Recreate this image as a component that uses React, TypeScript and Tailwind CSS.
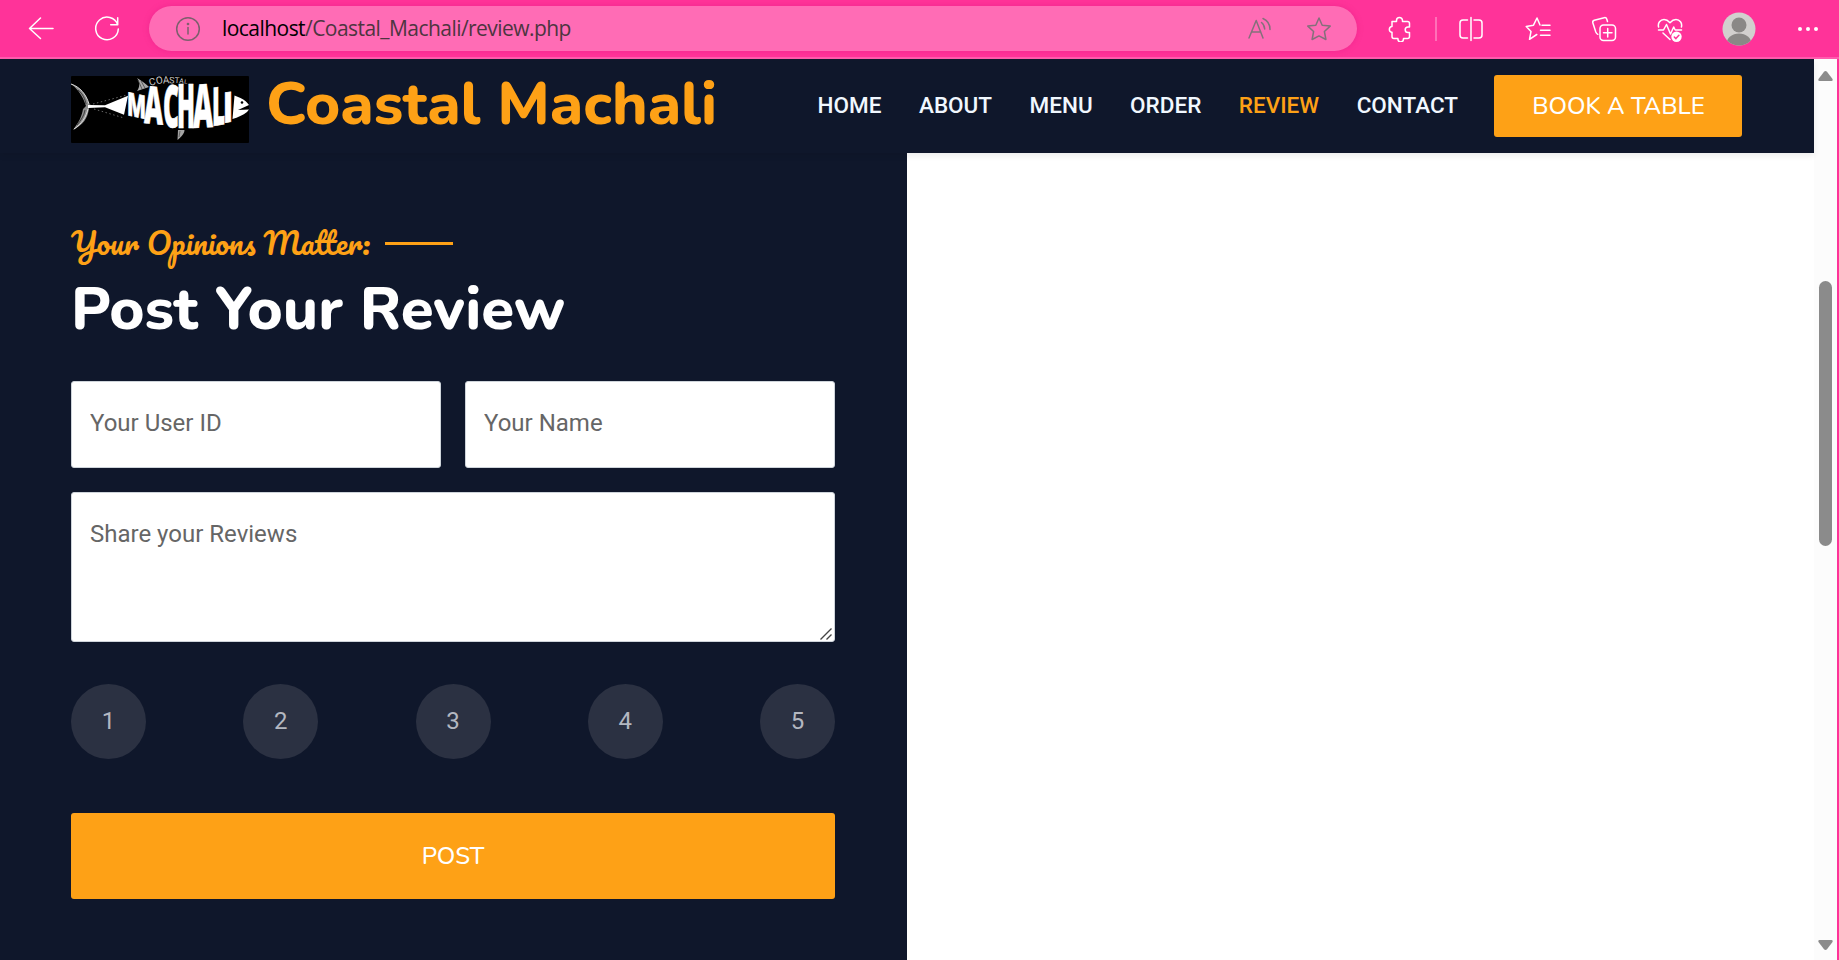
import type { ReactNode } from 'react';

function Icon({ children, className = '' }: { children: ReactNode; className?: string }) {
  return (
    <svg
      viewBox="0 0 26 26"
      className={`h-[26px] w-[26px] shrink-0 ${className}`}
      fill="none"
      stroke="currentColor"
      strokeWidth="1.5"
      strokeLinecap="round"
      strokeLinejoin="round"
    >
      {children}
    </svg>
  );
}

const starPath =
  'M13 2l3.2 7.2 8 .9-5.8 5.4 1.5 8L13 19.900l-6.900 3.600 1.500-8L1.800 10.100l8-.9z';

function Toolbar() {
  return (
    <header className="flex h-[59px] shrink-0 items-center border-b-2 border-[#ff5cae] bg-[#ff3399] pl-7 text-white">
      <Icon>
        <path d="M25 12.500H1.500M12.500 2L1.500 12.500 12.500 22.500" />
      </Icon>
      <Icon className="ml-10">
        <path d="M23.700 8.800A11.300 11.300 0 1 0 24.300 13M23.700 1.800v7h-7" />
      </Icon>
      <div className="ml-[29px] flex h-[45px] w-[1208px] shrink-0 items-center rounded-full bg-[#ff6cb5] pr-[25px] pl-[26px] text-[#85707b] shadow-[0_0_6px_rgba(200,0,110,0.25)]">
        <Icon className="text-[#7d5f6d]">
          <circle cx="13" cy="13" r="11.300" />
          <path d="M13 11.500v6.500" />
          <circle cx="13" cy="8" r="0.600" fill="currentColor" />
        </Icon>
        <span className="ml-[21px] font-['Open_Sans',sans-serif] text-[21px] tracking-[-0.55px] whitespace-nowrap text-[#4d3540]">
          <span className="text-black">localhost</span>/Coastal_Machali/review.php
        </span>
        <Icon className="ml-auto">
          <path d="M2 22L9.200 4.500 16 22M4.500 16h9.300M14.500 6.500c2 1.500 3 3.500 3.200 6.500M16 2.500c4.500 2 7 5.500 7 11" />
        </Icon>
        <Icon className="ml-[33px]">
          <path d={starPath} />
        </Icon>
      </div>
      <Icon className="ml-[30px]">
        <path d="M5 5.500h4.500v-1a3 3 0 0 1 6 0v1h5a2 2 0 0 1 2 2V11h-1.500a2.800 2.800 0 0 0 0 5.600h1.500v4a2 2 0 0 1-2 2h-4v.5a2.800 2.800 0 0 1-5.600 0v-.5H7a2 2 0 0 1-2-2v-4.300H4.600a3 3 0 0 1 0-5.800H5z" />
      </Icon>
      <div className="ml-[22px] h-6 w-0.5 bg-[#ff70b8]" />
      <Icon className="ml-[21px]">
        <path d="M13 1.500v23M9.500 4H5a3 3 0 0 0-3 3v12a3 3 0 0 0 3 3h4.500M16 4h5a3 3 0 0 1 3 3v12a3 3 0 0 1-3 3h-5" />
      </Icon>
      <Icon className="ml-[41px]">
        <path d="M11 19l-6.500 4.300L6 15.500 1.200 10.500l7.300-1.300L12 2l3 7M17 9.200h8M15.500 14.200H25M15.500 19.200H25M11 19l.8-.5" />
      </Icon>
      <Icon className="ml-10">
        <rect x="9" y="9" width="15.500" height="15.500" rx="3.500" />
        <path d="M16.700 12.500v8.500M12.500 16.700H21M16.500 5.500l-.7-2.300a2.200 2.200 0 0 0-2.600-1.500L3.300 4.200a2.200 2.200 0 0 0-1.500 2.600l3 9.200c.4 1.100 1 1.800 2 2.300" />
      </Icon>
      <Icon className="ml-10">
        <path d="M1.600 11C.5 7 3.300 3.500 7 3.500c2.500 0 4.300 1.300 6 3.200 1.700-1.900 3.500-3.200 6-3.200 3.700 0 6.500 3.500 5.400 7.500M1.500 14h5L9.500 8.500l4 9.500 3.200-7 1.500 3h6.300M6 17l7 6.500" />
        <circle cx="19.500" cy="20.800" r="5.200" fill="currentColor" stroke="none" />
        <path d="M17.300 21l1.600 1.600 3-3.300" stroke="#ff3399" />
      </Icon>
      <svg viewBox="0 0 34 34" className="ml-[39px] h-[34px] w-[34px] shrink-0">
        <clipPath id="avatar">
          <circle cx="17" cy="17" r="16.500" />
        </clipPath>
        <g clipPath="url(#avatar)">
          <rect width="34" height="34" fill="#d2d0ce" />
          <circle cx="17" cy="13" r="7.500" fill="#8a8886" />
          <ellipse cx="17" cy="32" rx="12.500" ry="10.500" fill="#8a8886" />
        </g>
      </svg>
      <div className="ml-[42px] flex gap-1">
        <span className="h-1 w-1 rounded-full bg-white" />
        <span className="h-1 w-1 rounded-full bg-white" />
        <span className="h-1 w-1 rounded-full bg-white" />
      </div>
    </header>
  );
}

const logoLetters = [
  { c: 'M', x: 56, y: 39, w: 19, h: 23, skew: 12 },
  { c: 'A', x: 73, y: 47, w: 19, h: 37, skew: 5 },
  { c: 'C', x: 92, y: 51, w: 16, h: 42, skew: 2 },
  { c: 'H', x: 106, y: 52, w: 18, h: 44, skew: 0 },
  { c: 'A', x: 122, y: 52, w: 20, h: 43, skew: -3 },
  { c: 'L', x: 141, y: 50, w: 13, h: 38, skew: -8 },
  { c: 'I', x: 152, y: 47, w: 10, h: 30, skew: -9 },
];

function FishLogo() {
  return (
    <svg viewBox="0 0 178 67" className="h-[67px] w-[178px] shrink-0 overflow-visible rounded-[1px] bg-black">
      <path d="M0 8c9 3 15 10 18 20l4 2-4 2C17 42 12 49 2 54c6-8 9-14 10-21l3-3C12 21 8 14 0 8z" fill="#8d8d8d" />
      <path d="M0 8c9 3 15 10 18 20M3 53c8-5 12-12 14-20" stroke="#ddd" strokeWidth="1" fill="none" />
      <path d="M7 14c5 4 7 9 8 14M6 49c4-5 7-9 8-15" stroke="#333" strokeWidth="0.900" fill="none" />
      <path d="M17 29l17 .3 23-9.500-4 19-19-7.600-17 .8z" fill="#fff" />
      <path d="M22 28l34-9M23 33l30 9" stroke="#666" strokeWidth="1" strokeDasharray="1.500 2.500" />
      <path d="M66 2c5 3 9 6 12 9l-12 4c3-4 3-9 0-13z" fill="#aaa" />
      <path d="M67 4l4 9M70 5l4 7" stroke="#444" strokeWidth="0.800" />
      <g fill="#c8c8c8" fontFamily="Roboto, sans-serif" fontSize="10">
        <text transform="translate(79 10) rotate(-16)">C</text>
        <text transform="translate(85.500 8.300) rotate(-10)">O</text>
        <text transform="translate(92 7.500) rotate(-3)">A</text>
        <text transform="translate(98 7.200) rotate(2)" fontSize="9">S</text>
        <text transform="translate(103.500 6.800) rotate(4)" fontSize="8">T</text>
        <text transform="translate(108 7) rotate(7)" fontSize="7">A</text>
        <text transform="translate(113 7.500) rotate(8)" fontSize="6">L</text>
      </g>
      {logoLetters.map((l, i) => (
        <text
          key={i}
          transform={`translate(${l.x} ${l.y}) skewY(${l.skew})`}
          fontFamily="Open Sans, sans-serif"
          fontWeight="800"
          fontSize={l.h / 0.714}
          textLength={l.w}
          lengthAdjust="spacingAndGlyphs"
          fill="#fff"
          stroke="#fff"
          strokeWidth="0.7"
        >
          {l.c}
        </text>
      ))}
      <path d="M163.500 19.500l6 2.500c4 2 7 4.500 8.500 7l-11 5 11-.5-2 2.500c-4 3-9 5.500-14.500 7z" fill="#fff" />
      <circle cx="171" cy="26.500" r="1.300" />
      <path d="M107 54h6.500c0 3-3 7-7 10z" fill="#a5a5a5" />
      <path d="M109 55l-1 6" stroke="#555" strokeWidth="0.800" />
    </svg>
  );
}

const links = ['HOME', 'ABOUT', 'MENU', 'ORDER', 'REVIEW', 'CONTACT'];

function Navbar() {
  return (
    <nav className="z-10 flex h-[94px] shrink-0 items-center bg-[#0f172b] pr-[72px] pl-[71px] shadow-[0_3px_6px_rgba(0,0,0,0.075)]">
      <div className="pt-[7px]">
        <FishLogo />
      </div>
      <span className="-mt-1 ml-[17px] font-['Nunito',sans-serif] text-[60px] leading-[72px] font-extrabold whitespace-nowrap text-[#fea116]">
        Coastal Machali
      </span>
      <div className="ml-auto flex gap-[37.5px] pb-0.5 font-['Roboto',sans-serif] text-[22.5px] leading-[34px] font-medium text-[#f1f8ff]">
        {links.map((l) => (
          <a key={l} className={l === 'REVIEW' ? 'text-[#fea116]' : ''}>
            {l}
          </a>
        ))}
      </div>
      <button className="ml-9 h-[62px] w-[248px] rounded-[3px] bg-[#fea116] pl-px font-['Nunito',sans-serif] text-[24px] font-[550] text-white">
        BOOK A TABLE
      </button>
    </nav>
  );
}

const field =
  "block rounded-[3px] border border-[#ced4da] bg-white px-[18px] font-['Roboto',sans-serif] text-[24px] leading-9 text-black outline-none placeholder:text-[#666666] placeholder:opacity-100";

function ReviewForm() {
  return (
    <section className="w-[907px] shrink-0 bg-[#0f172b] pt-[72px] pr-[72px] pl-[71px]">
      <div className="flex items-center gap-[15px] text-[#fea116]">
        <h5 className="font-['Pacifico',cursive] text-[30px] leading-9 font-normal">Your Opinions Matter:</h5>
        <div className="mt-px h-[3px] w-[68px] bg-[#fea116]" />
      </div>
      <h1 className="mt-3 font-['Nunito',sans-serif] text-[60px] leading-[72px] font-extrabold text-white">
        Post Your Review
      </h1>
      <form className="mt-9 flex flex-col">
        <div className="flex gap-6">
          <input className={`h-[87px] w-[370px] pb-1 ${field}`} placeholder="Your User ID" />
          <input className={`h-[87px] w-[370px] pb-1 ${field}`} placeholder="Your Name" />
        </div>
        <div className="relative mt-6">
          <textarea
            className={`h-[150px] w-full resize-none pt-[23px] ${field}`}
            placeholder="Share your Reviews"
          />
          <svg
            viewBox="0 0 14 14"
            className="absolute right-0.5 bottom-px h-[14px] w-[14px]"
            fill="none"
            stroke="#444"
            strokeWidth="1.4"
          >
            <path d="M1.500 12.500l11-11M7.500 12.500l5-5" />
          </svg>
        </div>
        <div className="mt-[42px] flex justify-between">
          {[1, 2, 3, 4, 5].map((n) => (
            <button
              key={n}
              type="button"
              className="h-[75px] w-[75px] rounded-full bg-[#2b3142] pb-0.5 font-['Roboto',sans-serif] text-[24px] text-[#b3b7c0]"
            >
              {n}
            </button>
          ))}
        </div>
        <button
          type="button"
          className="mt-[54px] h-[86px] rounded-[3px] bg-[#fea116] font-['Nunito',sans-serif] text-[24px] font-[550] text-white"
        >
          POST
        </button>
      </form>
    </section>
  );
}

function Scrollbar() {
  return (
    <div className="flex w-[25px] shrink-0 flex-col items-center border-r-2 border-[#ff3399] bg-[#fcfcfc] pt-3 pb-[10px]">
      <svg viewBox="0 0 15 10" className="h-[10px] w-[15px]" fill="#8b8b8b">
        <path d="M6 .8Q7.500-.6 9 .8L14.500 8Q15.200 10 13.500 10h-12Q-.2 10 .5 8z" />
      </svg>
      <div className="mt-[200px] h-[265px] w-[13px] rounded-full bg-[#8b8b8b]" />
      <svg viewBox="0 0 15 10" className="mt-auto h-[10px] w-[15px] rotate-180" fill="#8b8b8b">
        <path d="M6 .8Q7.500-.6 9 .8L14.500 8Q15.200 10 13.500 10h-12Q-.2 10 .5 8z" />
      </svg>
    </div>
  );
}

export default function App() {
  return (
    <div className="flex h-[960px] w-[1839px] flex-col overflow-hidden bg-white">
      <Toolbar />
      <div className="flex min-h-0 flex-1">
        <div className="flex min-w-0 flex-1 flex-col">
          <Navbar />
          <main className="flex flex-1 bg-white">
            <ReviewForm />
          </main>
        </div>
        <Scrollbar />
      </div>
    </div>
  );
}
